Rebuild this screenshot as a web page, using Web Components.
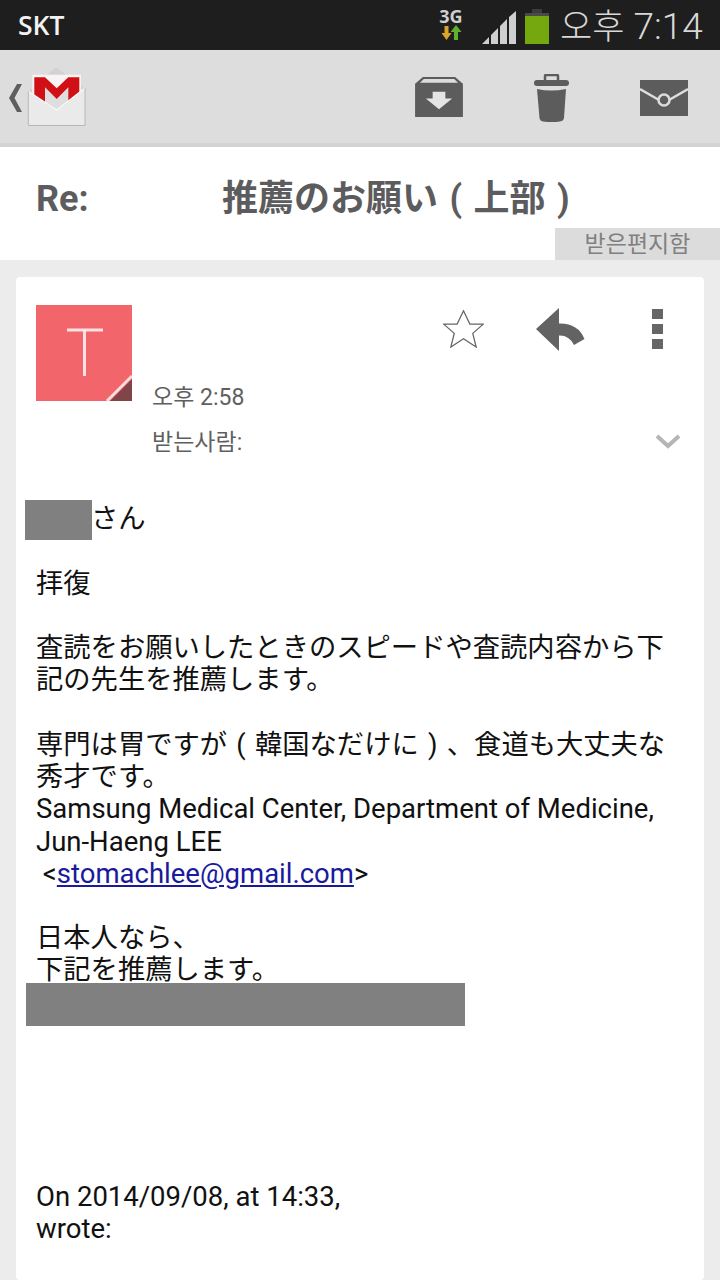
<!DOCTYPE html>
<html lang="ja">
<head>
<meta charset="utf-8">
<title>Re: 推薦のお願い</title>
<style>
  html, body { margin: 0; padding: 0; }
  body {
    width: 720px;
    height: 1280px;
    overflow: hidden;
    background: #ececec;
    font-family: Roboto, "Noto Sans CJK JP", "Noto Sans CJK KR", sans-serif;
  }
</style>
</head>
<body>
<status-bar></status-bar>
<action-bar></action-bar>
<subject-header></subject-header>
<message-card>
  <message-body></message-body>
</message-card>

<script>
class StatusBar extends HTMLElement {
  constructor() {
    super();
    this.attachShadow({ mode: 'open' }).innerHTML = `
      <style>
        :host {
          display: flex;
          align-items: center;
          height: 50px;
          background: #1e1e1e;
          box-sizing: border-box;
          padding: 0 18px;
        }
        .carrier { font: 600 26.500px/50px "Open Sans", sans-serif; color: #f2f2f2; }
        .right { margin-left: auto; display: flex; align-items: center; }
        .net { width: 26px; height: 38px; margin-right: 18px; margin-top: 2px; }
        .net b { display: block; font: 700 18px/18px "Noto Sans", sans-serif; color: #cfcfcf; text-align: center; }
        .net svg { display: block; margin: 0 auto; }
        .signal { display: block; margin-right: 9px; margin-top: 5px; }
        .battery { display: block; margin-right: 11px; margin-top: 3px; }
        .time { width: 142px; font: 300 37px/50px Roboto, sans-serif; color: #d8d8d8; white-space: nowrap; text-align: right; }
        .time i { font: 300 35px/50px "Noto Sans CJK KR", sans-serif; }
      </style>
      <span class="carrier">SKT</span>
      <div class="right">
        <div class="net">
          <b>3G</b>
          <svg width="21" height="16" viewBox="0 0 21 16">
            <path d="M3.500 1H7.500V8H10.500L5.500 15 .5 8H3.500z" fill="#d9a42c"/>
            <path d="M13 15H17V7H20.500L15 0 9.500 7H13z" fill="#5fb02c"/>
          </svg>
        </div>
        <svg class="signal" width="34" height="34" viewBox="0 0 34 34">
          <path d="M0 33 7 26V33zM9 24l7-7V33H9zM18 15l7-7V33H18zM27 6l7-6V33H27z" fill="#cfcfcf"/>
        </svg>
        <svg class="battery" width="24" height="36" viewBox="0 0 24 36">
          <rect x="7" y="0" width="10" height="4" fill="#3c3c3c"/>
          <rect x="0" y="4" width="24" height="4" fill="#4a4a4a"/>
          <rect x="0" y="7" width="24" height="28" fill="#75a80e"/>
        </svg>
        <span class="time"><i>오후</i> 7:14</span>
      </div>
    `;
  }
}
customElements.define('status-bar', StatusBar);

class ActionBar extends HTMLElement {
  constructor() {
    super();
    this.attachShadow({ mode: 'open' }).innerHTML = `
      <style>
        :host {
          display: flex;
          align-items: center;
          height: 97px;
          box-sizing: border-box;
          background: #dddddd;
          border-bottom: 4px solid #d3d3d3;
        }
        .up { display: block; margin-left: 8px; margin-top: 2px; }
        .logo { display: block; margin-left: 2px; margin-top: -1px; }
        .icons { margin-left: auto; display: flex; align-items: flex-start; margin-right: 32px; height: 48px; margin-top: 3px; }
        .icons svg { display: block; }
        .archive { margin-top: 3px; }
        .trash { margin-left: 71px; }
        .mail { margin-left: 71px; margin-top: 6px; }
      </style>
      <svg class="up" width="16" height="30" viewBox="0 0 16 30">
        <path d="M14 1H9L1 15l8 14h5L6.500 15z" fill="#5e5e5e"/>
      </svg>
      <svg class="logo" width="62" height="62" viewBox="0 0 62 62">
        <path d="M2.300 26.300 30 2.300 59 24V40H2.300z" fill="#d2d2d2"/>
        <path d="M6.300 9.700H55V48H6.300z" fill="#f9f3f3"/>
        <path d="M19 22.300 30.700 34 42.300 22.300V44H19z" fill="#dedede"/>
        <path d="M8.300 12.300H19L30.700 23.300 42.300 12.300H53.300V50H42.300V22.300L30.700 34 19 22.300V50H8.300z" fill="#d01015"/>
        <path d="M2.300 26.300 30.700 45 59 23V60.500H2.300z" fill="#eaeaea"/>
        <path d="M2.300 26.300 30.700 45 59 23" fill="none" stroke="#f8f8f8" stroke-width="1.200"/>
        <path d="M2.300 26.300V60.500H59V23" fill="none" stroke="#b8b8b8" stroke-width="1"/>
      </svg>
      <div class="icons">
        <svg class="archive" width="48" height="41" viewBox="0 0 49 42">
          <path d="M8 0H41L49 7V41H0V7z" fill="#5c5c5c"/>
          <path d="M9 2H40L44 6H5z" fill="#dddddd"/>
          <path d="M18 15H31V22H38L24.500 33 11 22H18z" fill="#e4e4e4"/>
        </svg>
        <svg class="trash" width="35" height="48" viewBox="0 0 35 48">
          <path d="M11 6V2q0-1 1-1H23q1 0 1 1V6" fill="none" stroke="#5c5c5c" stroke-width="2.500"/>
          <path d="M3 6H32q3 0 3 3t-3 3H3q-3 0-3-3t3-3z" fill="#5c5c5c"/>
          <path d="M3 15q14 3 29 0L30 44q-.5 3-4 3.500-8 1-17 0-3-.5-3.500-3.500z" fill="#5c5c5c"/>
        </svg>
        <svg class="mail" width="48" height="37" viewBox="0 0 48 37">
          <path d="M0 0H48V36H0z" fill="#5c5c5c"/>
          <path d="M0 9 19 20M48 9 29 20" stroke="#dddddd" stroke-width="2.500" fill="none"/>
          <circle cx="24" cy="20" r="5.500" fill="none" stroke="#dddddd" stroke-width="2.500"/>
        </svg>
      </div>
    `;
  }
}
customElements.define('action-bar', ActionBar);

class SubjectHeader extends HTMLElement {
  constructor() {
    super();
    this.attachShadow({ mode: 'open' }).innerHTML = `
      <style>
        :host {
          display: block;
          height: 113px;
          background: #ffffff;
          color: #5c5c5e;
          position: relative;
        }
        .subject {
          display: flex;
          padding: 29px 0 0 36px;
          font: 700 36px/46px Roboto, "Noto Sans CJK JP", sans-serif;
          white-space: pre;
          word-spacing: 2.500px;
        }
        .re { width: 186px; }
        .label {
          position: absolute;
          right: 0;
          bottom: 0;
          width: 165px;
          height: 32px;
          background: #dcdcdc;
          color: #808080;
          font: 400 23px/28px "Noto Sans CJK KR", sans-serif;
          text-align: center;
        }
      </style>
      <div class="subject"><span class="re">Re:</span><span>推薦のお願い ( 上部 )</span></div>
      <span class="label">받은편지함</span>
    `;
  }
}
customElements.define('subject-header', SubjectHeader);

class MessageCard extends HTMLElement {
  constructor() {
    super();
    this.attachShadow({ mode: 'open' }).innerHTML = `
      <style>
        :host {
          display: block;
          margin: 17px 16px 0;
          background: #ffffff;
          border-radius: 4px;
          height: 1003px;
          overflow: hidden;
          color: #5f5f5f;
        }
        header {
          display: flex;
          height: 185px;
          box-sizing: border-box;
          padding: 28px 0 0 20px;
        }
        .avatar { display: block; flex: none; }
        .meta {
          flex: 1;
          padding: 70px 0 0 20px;
          font: 400 23px/45px Roboto, "Noto Sans CJK KR", sans-serif;
        }
        .meta div { height: 45px; white-space: nowrap; }
        .tools {
          display: flex;
          align-items: flex-start;
          padding: 4px 41px 0 0;
          position: relative;
        }
        .tools svg { display: block; }
        .star { margin-top: 1px; }
        .reply { margin-left: 52px; margin-top: -1px; }
        .more { margin-left: 67px; }
        .chevron { position: absolute; right: 23px; top: 129px; }
      </style>
      <header>
        <svg class="avatar" width="96" height="96" viewBox="0 0 96 96">
          <rect width="96" height="96" fill="#f2656a"/>
          <path d="M31 25H67M48.500 25V71" stroke="#fde4e4" stroke-width="3" fill="none"/>
          <path d="M96 74 74 96H96z" fill="#7f4548"/>
          <path d="M96 71 71 96" stroke="#fbdcdc" stroke-width="3"/>
        </svg>
        <div class="meta">
          <div>오후 2:58</div>
          <div>받는사람:</div>
        </div>
        <div class="tools">
          <svg class="star" width="41" height="38" viewBox="0 0 42 39">
            <path d="M21 .8 27.500 14.500H41.300L30.500 24 34 38 21 29.500 8 38 11.500 24 .7 14.500H14.500z" fill="none" stroke="#666666" stroke-width="1.300"/>
          </svg>
          <svg class="reply" width="49" height="44" viewBox="0 0 49 44">
            <path d="M23 0V15.500Q42 15 48.500 31L38 37Q33 27 23 27.500V43L0 21z" fill="#636363"/>
          </svg>
          <svg class="more" width="11" height="40" viewBox="0 0 11 40">
            <path d="M0 0H11V10H0zM0 15H11V25H0zM0 30H11V40H0z" fill="#666666"/>
          </svg>
          <svg class="chevron" width="26" height="16" viewBox="0 0 26 16">
            <path d="M2 2 13 12 24 2" fill="none" stroke="#b5b5b5" stroke-width="4"/>
          </svg>
        </div>
      </header>
      <slot></slot>
    `;
  }
}
customElements.define('message-card', MessageCard);

class MessageBody extends HTMLElement {
  constructor() {
    super();
    this.attachShadow({ mode: 'open' }).innerHTML = `
      <style>
        :host {
          display: block;
          padding: 38px 0 0 20px;
          color: #111111;
          font: 400 27.300px/32px Roboto, "Noto Sans CJK JP", sans-serif;
        }
        p { margin: 0; white-space: nowrap; }
        .en { font-size: 27.500px; }
        .gap { height: 32px; }
        .parens { word-spacing: 2.500px; }
        .name {
          display: inline-block;
          width: 67px;
          height: 40px;
          margin-left: -11px;
          margin-right: -1px;
          vertical-align: -12px;
          background: #808080;
        }
        .mask {
          width: 439px;
          height: 43px;
          margin: -3px 0 0 -10px;
          background: #808080;
        }
        a { color: #1a1a9c; text-decoration: underline; }
        .sign { margin-top: 155px; }
      </style>
      <p><span class="name"></span>さん</p>
      <p style="margin-top: 28px">拝復</p>
      <div class="gap"></div>
      <p>査読をお願いしたときのスピードや査読内容から下</p>
      <p>記の先生を推薦します。</p>
      <div class="gap" style="height: 33px"></div>
      <p class="parens">専門は胃ですが ( 韓国なだけに ) 、食道も大丈夫な</p>
      <p>秀才です。</p>
      <p class="en">Samsung Medical Center, Department of Medicine,</p>
      <p class="en" style="margin-top: 1px">Jun-Haeng LEE</p>
      <p class="en">&nbsp;&lt;<a href="#">stomachlee@gmail.com</a>&gt;</p>
      <div class="gap"></div>
      <p>日本人なら、</p>
      <p>下記を推薦します。</p>
      <div class="mask"></div>
      <p class="en sign">On 2014/09/08, at 14:33,</p>
      <p class="en">wrote:</p>
    `;
  }
}
customElements.define('message-body', MessageBody);
</script>
</body>
</html>
